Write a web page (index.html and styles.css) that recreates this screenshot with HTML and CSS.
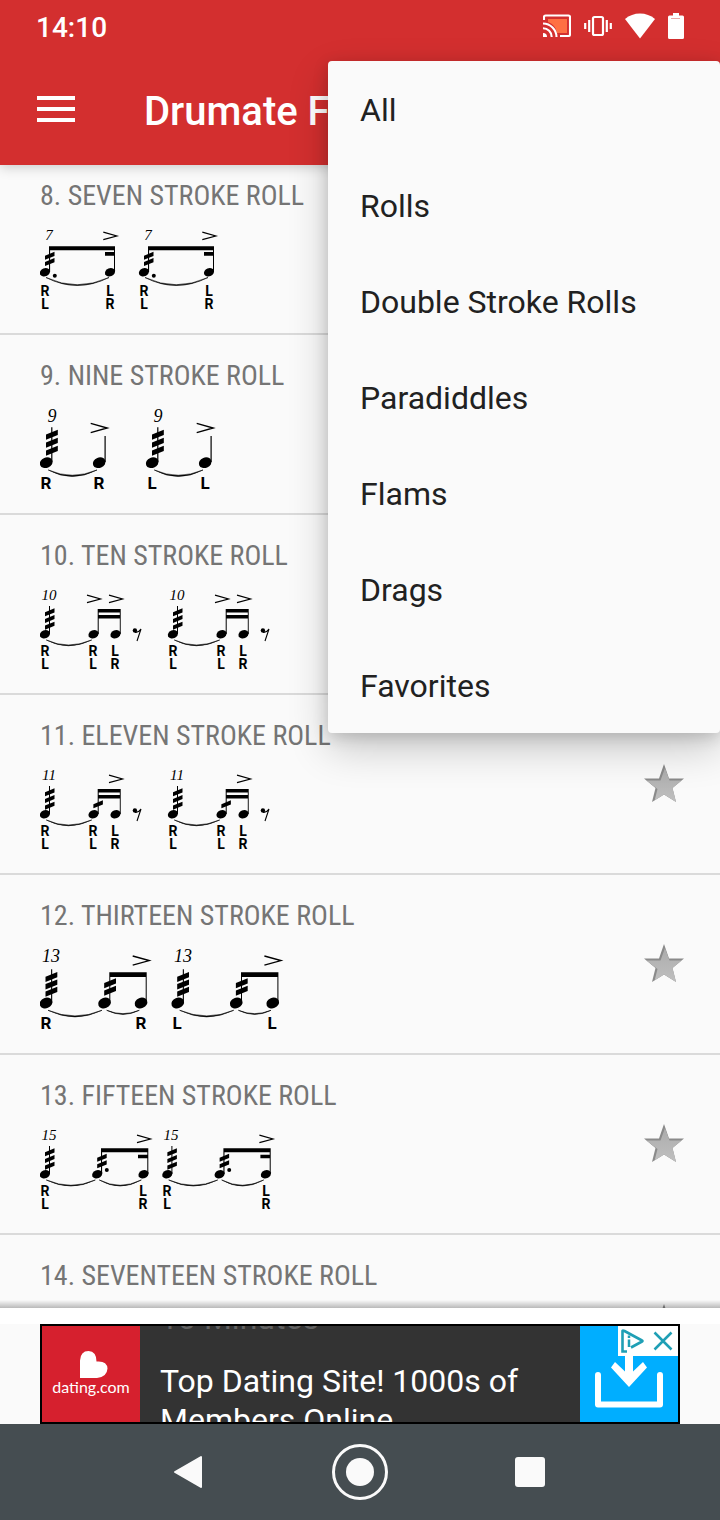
FILE: index.html
```html
<!DOCTYPE html>
<html lang="en">
<head>
<meta charset="utf-8">
<meta name="viewport" content="width=device-width, initial-scale=1">
<title>Drumate</title>
<link rel="stylesheet" href="styles.css">
</head>
<body>
<svg class="defs" aria-hidden="true">
  <defs>
    <linearGradient id="star-fill" x1="0" y1="0" x2="0" y2="1"><stop offset="0" stop-color="#acacac"/><stop offset="1" stop-color="#c0c0c0"/></linearGradient>
    <clipPath id="star-clip"><path d="M20 0L25 14.500H40L28.500 24L32 38L20 30.500L8 38L11.500 24L0 14.500H15Z"/></clipPath>
    <g id="star">
      <path d="M20 0L25 14.500H40L28.500 24L32 38L20 30.500L8 38L11.500 24L0 14.500H15Z" fill="#8a8a8a"/>
      <path d="M21 4L25.500 16.500H41L29.500 25L33 39L21 31.500L10 39L13.500 25L2 16.500H16.500Z" fill="url(#star-fill)" clip-path="url(#star-clip)"/>
    </g>
    <ellipse id="head-s" rx="5.200" ry="4.100" transform="rotate(-22)"/>
    <ellipse id="head-l" rx="6.500" ry="5.200" transform="rotate(-22)"/>
    <path id="slash-s" d="M0 3.900L9.500 0V4.100L0 8Z"/>
    <path id="slash-l" d="M0 4.700L11.800 0V5.300L0 10Z"/>
    <path id="accent-s" d="M0 0L13.500 3.800L0 7.500" fill="none" stroke="#000" stroke-width="1.200"/>
    <path id="accent-l" d="M0 0L16.500 4.600L0 9.200" fill="none" stroke="#000" stroke-width="1.400"/>
    <g id="rest">
      <circle cx="2.200" cy="2.400" r="2.200"/>
      <path d="M2 4.200Q5.500 5 8.300 1L4.300 13" fill="none" stroke="#000" stroke-width="1.100"/>
    </g>
    <g id="roll-s">
      <path d="M9 21H10V49H9Z"/>
      <use href="#slash-s" x="5" y="23.300"/><use href="#slash-s" x="5" y="30"/><use href="#slash-s" x="5" y="36.700"/>
      <use href="#head-s" x="4.900" y="49.300"/>
    </g>
    <g id="seven">
      <path d="M9 21.300H75V25.300H9ZM65 27H75V30.700H65ZM9 22H10.100V47H9ZM74 22H75V47H74Z"/>
      <use href="#slash-s" x="5" y="26.800"/><use href="#slash-s" x="5" y="33.100"/>
      <use href="#head-s" x="4.900" y="47.200"/><use href="#head-s" x="70" y="47.200"/>
      <circle cx="14.800" cy="50.800" r="2"/>
      <use href="#accent-s" x="63.300" y="7.200"/>
      <path class="tie" d="M6 52.500Q37 68.500 69 52.500Q37 67 6 52.500Z"/>
    </g>
    <g id="nine">
      <path d="M11.200 22.300H12.400V57H11.200ZM64.500 31H65.700V57H64.500Z"/>
      <use href="#slash-l" x="6" y="24.800"/><use href="#slash-l" x="6" y="32.800"/><use href="#slash-l" x="6" y="40.800"/>
      <use href="#head-l" x="6.200" y="57.700"/><use href="#head-l" x="59.200" y="57.700"/>
      <use href="#accent-l" x="50.700" y="18.400"/>
      <path class="tie" d="M8.300 65Q32 78 57 65Q32 75.500 8.300 65Z"/>
    </g>
    <g id="ten-base">
      <use href="#roll-s"/>
      <path d="M57.700 24H80.700V27.500H57.700ZM57.700 30H80.700V33.500H57.700ZM57.700 24H58.700V49H57.700ZM79.800 24H80.700V49H79.800Z"/>
      <use href="#head-s" x="53.500" y="49.300"/><use href="#head-s" x="75.500" y="49.300"/>
      <use href="#accent-s" x="69" y="10.200"/>
      <use href="#rest" x="92.700" y="43"/>
      <path class="tie" d="M6.300 55Q28 66.500 51.700 55Q28 65 6.300 55Z"/>
    </g>
    <g id="thirteen">
      <path d="M11.100 24.300H12.200V58H11.100ZM69.300 27.300H106.700V32H69.300ZM69.300 27.300H70.300V58H69.300ZM105.700 27.300H106.700V58H105.700Z"/>
      <use href="#slash-l" x="5.500" y="27"/><use href="#slash-l" x="5.500" y="34.400"/><use href="#slash-l" x="5.500" y="41.800"/>
      <use href="#slash-l" x="64.200" y="33.300"/><use href="#slash-l" x="64.200" y="40.800"/>
      <use href="#head-l" x="6" y="58"/><use href="#head-l" x="64.500" y="58"/><use href="#head-l" x="101" y="58"/>
      <use href="#accent-l" x="92.700" y="11"/>
      <path class="tie" d="M8 65.300Q35 78.500 62 65.300Q35 76.500 8 65.300ZM66.700 65.300Q83 73.500 99.300 65.300Q83 72 66.700 65.300Z"/>
    </g>
    <g id="fifteen">
      <use href="#roll-s"/>
      <path d="M61 23.300H108.300V27.300H61ZM98 29.700H108.300V33.300H98ZM61 24H62.100V49H61ZM107.300 24H108.300V49H107.300Z"/>
      <use href="#slash-s" x="57.200" y="28.800"/><use href="#slash-s" x="57.200" y="35.300"/>
      <use href="#head-s" x="57.200" y="49.300"/><use href="#head-s" x="103.500" y="49.300"/>
      <circle cx="66.800" cy="45" r="2"/>
      <use href="#accent-s" x="97" y="10.200"/>
      <path class="tie" d="M6.300 55Q31 67 55.300 55Q31 65.500 6.300 55ZM59.300 55Q80 67 101.300 55Q80 65.500 59.300 55Z"/>
    </g>
  </defs>
</svg>

<div class="phone">
  <header class="top">
    <div class="status">
      <time class="clock">14:10</time>
      <div class="status-icons">
        <svg width="28" height="24" viewBox="0 0 28 24" aria-label="Casting">
          <path d="M5 5H24V19H14Q13 11 5 8Z" fill="#ff7043"/>
          <path d="M1 6V3Q1 1.500 2.500 1.500H25.500Q27 1.500 27 3V20.500Q27 22 25.500 22H17M0 9.500A13.500 13.500 0 0 1 13.500 23M0 14.300A8.700 8.700 0 0 1 8.700 23" fill="none" stroke="#fff" stroke-width="2.100"/>
          <path d="M0 19A4 4 0 0 1 4 23H0Z" fill="#fff"/>
        </svg>
        <svg width="28" height="24" viewBox="0 0 28 24" aria-label="Vibrate">
          <rect x="9" y="3" width="10" height="18" rx="1.500" fill="none" stroke="#fff" stroke-width="2.200"/>
          <path d="M5.200 6V18M1.200 9V15M22.800 6V18M26.800 9V15" stroke="#fff" stroke-width="2.200"/>
        </svg>
        <svg width="30" height="26" viewBox="0 0 30 26" aria-label="Wi-Fi"><path d="M0 6Q6.500 .500 15 .500T30 6L15 25.500Z" fill="#fff"/></svg>
        <svg width="16" height="26" viewBox="0 0 16 26" aria-label="Battery"><path d="M5 0H11V2.500H14.500Q16 2.500 16 4V24.500Q16 26 14.500 26H1.500Q0 26 0 24.500V4Q0 2.500 1.500 2.500H5Z" fill="#fff"/><path d="M3 5.500H12" stroke="#e9a7a5" stroke-width="1"/></svg>
      </div>
    </div>
    <div class="app-bar">
      <button class="icon-button" type="button" aria-label="Open navigation">
        <svg width="38" height="28" viewBox="0 0 38 28"><path d="M0 3H38M0 14H38M0 25H38" stroke="#fff" stroke-width="4"/></svg>
      </button>
      <h1 class="app-title">Drumate F</h1>
    </div>
  </header>

  <main class="list-wrap">
    <ul class="list">
      <li class="row">
        <div class="rudiment">
          <h2 class="name">8. SEVEN STROKE ROLL</h2>
          <svg class="score" width="260" height="90" viewBox="0 0 260 90">
            <use href="#seven"/><use href="#seven" x="99"/>
            <text class="count" x="9" y="15">7</text><text class="count" x="108" y="15">7</text>
            <g class="hand"><text x="5" y="71">R</text><text x="5" y="84">L</text><text x="70" y="71">L</text><text x="70" y="84">R</text>
            <text x="104" y="71">R</text><text x="104" y="84">L</text><text x="169" y="71">L</text><text x="169" y="84">R</text></g>
          </svg>
        </div>
      </li>
      <li class="row">
        <div class="rudiment">
          <h2 class="name">9. NINE STROKE ROLL</h2>
          <svg class="score" width="260" height="90" viewBox="0 0 260 90">
            <use href="#nine"/><use href="#nine" x="106"/>
            <text class="count large" x="12" y="17">9</text><text class="count large" x="118" y="17">9</text>
            <g class="hand large"><text x="6" y="84">R</text><text x="59" y="84">R</text><text x="112" y="84">L</text><text x="165" y="84">L</text></g>
          </svg>
        </div>
      </li>
      <li class="row">
        <div class="rudiment">
          <h2 class="name">10. TEN STROKE ROLL</h2>
          <svg class="score" width="260" height="90" viewBox="0 0 260 90">
            <use href="#ten-base"/><use href="#ten-base" x="128"/><use href="#accent-s" x="47" y="10.200"/><use href="#accent-s" x="175" y="10.200"/>
            <text class="count" x="9" y="15">10</text><text class="count" x="137" y="15">10</text>
            <g class="hand"><text x="5" y="71">R</text><text x="5" y="84">L</text><text x="53" y="71">R</text><text x="53" y="84">L</text><text x="75" y="71">L</text><text x="75" y="84">R</text>
            <text x="133" y="71">R</text><text x="133" y="84">L</text><text x="181" y="71">R</text><text x="181" y="84">L</text><text x="203" y="71">L</text><text x="203" y="84">R</text></g>
          </svg>
        </div>
      </li>
      <li class="row">
        <div class="rudiment">
          <h2 class="name">11. ELEVEN STROKE ROLL</h2>
          <svg class="score" width="260" height="90" viewBox="0 0 260 90">
            <use href="#ten-base"/><use href="#ten-base" x="128"/><use href="#slash-s" x="53.400" y="35.300"/><use href="#slash-s" x="181.400" y="35.300"/>
            <text class="count" x="9" y="15">11</text><text class="count" x="137" y="15">11</text>
            <g class="hand"><text x="5" y="71">R</text><text x="5" y="84">L</text><text x="53" y="71">R</text><text x="53" y="84">L</text><text x="75" y="71">L</text><text x="75" y="84">R</text>
            <text x="133" y="71">R</text><text x="133" y="84">L</text><text x="181" y="71">R</text><text x="181" y="84">L</text><text x="203" y="71">L</text><text x="203" y="84">R</text></g>
          </svg>
        </div>
        <button class="star" type="button" aria-label="Add to favorites"><svg width="40" height="38" viewBox="0 0 40 38"><use href="#star"/></svg></button>
      </li>
      <li class="row">
        <div class="rudiment">
          <h2 class="name">12. THIRTEEN STROKE ROLL</h2>
          <svg class="score" width="260" height="90" viewBox="0 0 260 90">
            <use href="#thirteen"/><use href="#thirteen" x="131.700"/>
            <text class="count large" x="11" y="17">13</text><text class="count large" x="143" y="17">13</text>
            <g class="hand large"><text x="6" y="84">R</text><text x="101" y="84">R</text><text x="137" y="84">L</text><text x="232" y="84">L</text></g>
          </svg>
        </div>
        <button class="star" type="button" aria-label="Add to favorites"><svg width="40" height="38" viewBox="0 0 40 38"><use href="#star"/></svg></button>
      </li>
      <li class="row">
        <div class="rudiment">
          <h2 class="name">13. FIFTEEN STROKE ROLL</h2>
          <svg class="score" width="260" height="90" viewBox="0 0 260 90">
            <use href="#fifteen"/><use href="#fifteen" x="122.400"/>
            <text class="count" x="9" y="15">15</text><text class="count" x="131" y="15">15</text>
            <g class="hand"><text x="5" y="71">R</text><text x="5" y="84">L</text><text x="103" y="71">L</text><text x="103" y="84">R</text>
            <text x="127" y="71">R</text><text x="127" y="84">L</text><text x="226" y="71">L</text><text x="226" y="84">R</text></g>
          </svg>
        </div>
        <button class="star" type="button" aria-label="Add to favorites"><svg width="40" height="38" viewBox="0 0 40 38"><use href="#star"/></svg></button>
      </li>
      <li class="row">
        <div class="rudiment">
          <h2 class="name">14. SEVENTEEN STROKE ROLL</h2>
        </div>
        <button class="star" type="button" aria-label="Add to favorites"><svg width="40" height="38" viewBox="0 0 40 38"><use href="#star"/></svg></button>
      </li>
    </ul>
  </main>

  <aside class="ad-area">
    <div class="ad">
      <div class="ad-logo">
        <svg width="28" height="28" viewBox="0 0 28 28" aria-hidden="true"><path d="M0 27V9.500Q.500 0 8.500 0Q16.500 .500 16.500 10.500Q27 9.500 27.500 17.500Q27 26 17 27Z" fill="#fff"/></svg>
        <span class="ad-brand">dating.com</span>
      </div>
      <div class="ad-copy">
        <p class="ad-old">10 Minutes</p>
        <p class="ad-text">Top Dating Site! 1000s of<br>Members Online</p>
      </div>
      <button class="ad-action" type="button" aria-label="Download">
        <svg width="68" height="58" viewBox="0 0 68 58"><path d="M3 25V54.500H65V25" fill="none" stroke="#fff" stroke-width="6" stroke-linecap="round" stroke-linejoin="round"/><path d="M30 0H38V21.500L48 12L52 17.500L34 37L16 17.500L20 12L30 21.500Z" fill="#fff"/></svg>
      </button>
      <div class="ad-choices">
        <button type="button" aria-label="Ad information"><svg width="24" height="24" viewBox="0 0 24 24"><path d="M7 22.500H2.500V2Q2.500 1 4.500 2L22 11.500Q23 12 22 12.500L11 18.500" fill="none" stroke="#1f9fb5" stroke-width="2.600"/><path d="M9 10.500V18M9 6.500V9" stroke="#1f9fb5" stroke-width="2.500"/></svg></button>
        <button type="button" aria-label="Close ad"><svg width="20" height="20" viewBox="0 0 20 20"><path d="M1.500 1.500L18.500 18.500M18.500 1.500L1.500 18.500" stroke="#1f9fb5" stroke-width="2.500"/></svg></button>
      </div>
    </div>
  </aside>

  <nav class="nav">
    <button type="button" aria-label="Back"><svg width="56" height="56" viewBox="0 0 56 56"><path d="M13 28L39 13V43Z" fill="#fafafa" stroke="#fafafa" stroke-width="2" stroke-linejoin="round"/></svg></button>
    <button type="button" aria-label="Home"><svg width="56" height="56" viewBox="0 0 56 56"><circle cx="28" cy="28" r="26.500" fill="none" stroke="#fafafa" stroke-width="3"/><circle cx="28" cy="28" r="14" fill="#fafafa"/></svg></button>
    <button type="button" aria-label="Recent apps"><svg width="56" height="56" viewBox="0 0 56 56"><rect x="13" y="13" width="30" height="30" rx="3" fill="#fafafa"/></svg></button>
  </nav>

  <div class="menu" role="menu">
    <button type="button" role="menuitem">All</button>
    <button type="button" role="menuitem">Rolls</button>
    <button type="button" role="menuitem">Double Stroke Rolls</button>
    <button type="button" role="menuitem">Paradiddles</button>
    <button type="button" role="menuitem">Flams</button>
    <button type="button" role="menuitem">Drags</button>
    <button type="button" role="menuitem">Favorites</button>
  </div>
</div>
</body>
</html>
```
FILE: styles.css
```css
* { box-sizing: border-box; }
body { margin: 0; background: #fafafa; font-family: Roboto, "Liberation Sans", sans-serif; }
h1, h2, p, ul { margin: 0; padding: 0; }
button { margin: 0; padding: 0; border: 0; background: none; font: inherit; color: inherit; cursor: pointer; }
svg { display: block; flex: none; }
.defs { position: absolute; width: 0; height: 0; }

.phone { position: relative; display: flex; flex-direction: column; height: 100vh; overflow: hidden; }

.top { position: relative; z-index: 1; background: #d32f2f; color: #fff; box-shadow: 0 2px 12px rgba(0, 0, 0, .2); }
.status { display: flex; align-items: center; justify-content: space-between; height: 52px; padding: 0 36px; }
.clock { font-size: 28px; font-weight: 500; line-height: 32px; padding-top: 4px; }
.status-icons { display: flex; align-items: center; gap: 13px; }
.app-bar { display: flex; align-items: center; gap: 69px; height: 113px; padding: 0 37px; }
.app-title { font-size: 40px; font-weight: 500; line-height: 48px; padding-top: 6px; }

.list-wrap { position: relative; flex: 1; min-height: 0; overflow: hidden; }
.list-wrap::after { content: ""; position: absolute; inset: auto 0 0; height: 8px; background: linear-gradient(rgba(0, 0, 0, 0), rgba(0, 0, 0, .26)); }
.list { margin-top: -10px; list-style: none; }
.row { display: flex; justify-content: space-between; height: 180px; padding: 25px 36px 0 40px; border-bottom: 2px solid #dadada; }
.rudiment { display: flex; flex-direction: column; gap: 13px; }
.name { color: #757575; font: 400 28px/32px "Roboto Condensed", "Liberation Sans Narrow", Roboto, sans-serif; white-space: nowrap; }
.star { align-self: flex-start; margin-top: 44px; }
.tie { stroke: #000; stroke-width: .600; }
.count { font: italic 15px "Liberation Serif", serif; text-anchor: middle; }
.hand { font: 700 14px Roboto, sans-serif; text-anchor: middle; }
.count.large { font-size: 18px; }
.hand.large { font-size: 17px; }

.ad-area { padding-top: 16px; background: linear-gradient(#fff 16px, #fafafa 16px); }
.ad { position: relative; display: flex; width: 640px; max-width: 100%; height: 100px; margin: 0 auto; border: 2px solid #000; overflow: hidden; background: #333; color: #fff; }
.ad-logo { display: flex; flex-direction: column; align-items: center; width: 98px; padding-top: 25px; background: #d6202e; }
.ad-logo svg { margin-left: 6px; }
.ad-brand { font: 400 16px/16px Lato, sans-serif; }
.ad-copy { flex: 1; display: flex; flex-direction: column; gap: 24px; margin-top: -27px; padding-left: 20px; font-size: 32px; line-height: 39px; white-space: nowrap; }
.ad-old { color: #626262; }
.ad-action { display: flex; flex-direction: column; align-items: center; justify-content: flex-end; width: 98px; padding-bottom: 14px; background: #00aeff; }
.ad-choices { position: absolute; top: 0; right: 0; display: flex; align-items: center; justify-content: space-between; width: 60px; height: 30px; padding: 0 5px 0 2px; background: #fff; }

.nav { display: flex; align-items: center; justify-content: center; gap: 114px; height: 96px; background: #454d51; }

.menu { position: absolute; z-index: 2; top: 61px; right: 0; display: flex; flex-direction: column; width: 392px; border-radius: 4px; background: #fafafa; color: #212121; box-shadow: 0 16px 40px rgba(0, 0, 0, .2), 0 4px 16px rgba(0, 0, 0, .16); }
.menu button { height: 96px; padding: 2px 32px 0; text-align: left; font-size: 32px; line-height: 40px; }
```
